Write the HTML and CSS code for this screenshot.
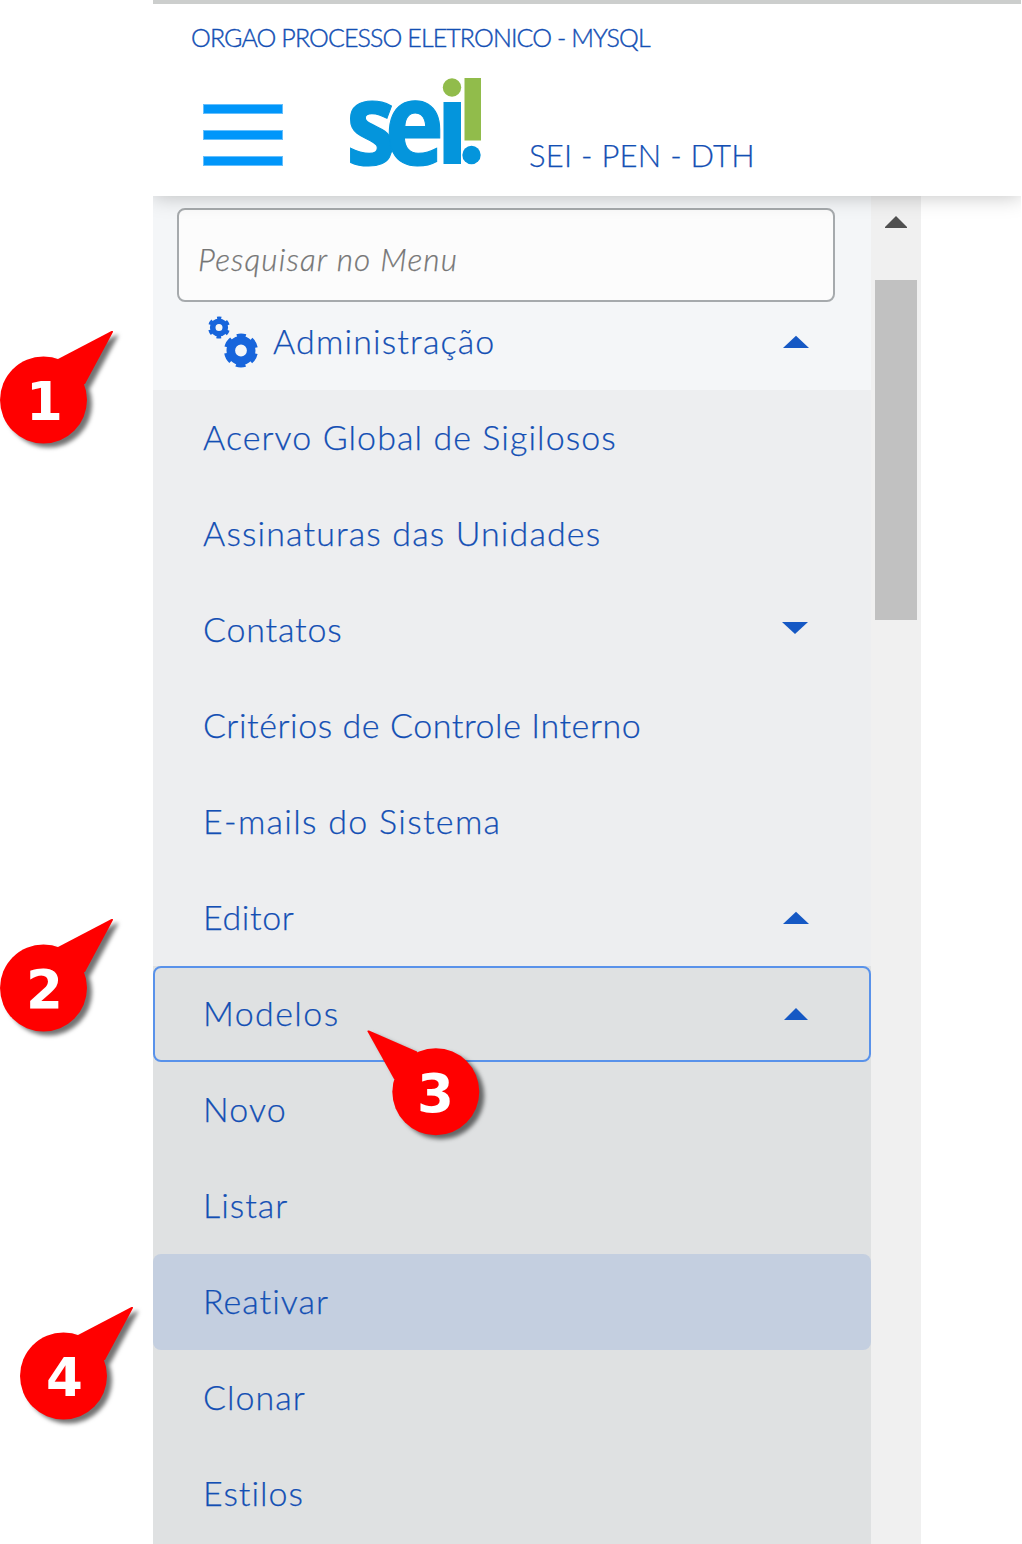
FILE: index.html
```html
<!DOCTYPE html>
<html lang="pt-BR">
<head>
<meta charset="utf-8">
<title>SEI - PEN - DTH</title>
<link rel="stylesheet" href="styles.css">
</head>
<body>
<div class="app">
  <header class="header">
    <div class="org"><span class="t-org">ORGAO PROCESSO ELETRONICO - MYSQL</span></div>
    <div class="brand">
      <div class="burger"><i></i><i></i><i></i></div>
      <svg class="logo" width="136" height="92" viewBox="0 0 136 92">
        <g fill="#0495dc">
          <text class="logo-text" transform="translate(-2 88.500) scale(.88 1)" x="0 44" y="0">se</text>
          <rect x="95.500" y="26" width="17.500" height="62"/>
          <circle cx="123.500" cy="79" r="9.200"/>
        </g>
        <g fill="#91bc4b">
          <circle cx="104" cy="11.500" r="9.200"/>
          <rect x="116.500" y="2" width="16.500" height="62.500"/>
        </g>
      </svg>
      <div class="system"><span class="t-system">SEI - PEN - DTH</span></div>
    </div>
  </header>
  <div class="body">
    <nav class="menu">
      <div class="search"><span class="t-search">Pesquisar no Menu</span></div>
      <a class="row root">
        <svg class="gears" width="52" height="54" viewBox="0 0 52 54">
          <g fill="none" stroke="#1765dc">
            <circle cx="12" cy="12.500" r="6.300" stroke-width="5.600"/>
            <circle cx="12" cy="12.500" r="9.500" stroke-width="3" stroke-dasharray="4.600 5.348" stroke-dashoffset="2.300" transform="rotate(-90 12 12.500)"/>
            <circle cx="34" cy="35.500" r="10.200" stroke-width="8.600"/>
            <circle cx="34" cy="35.500" r="14.800" stroke-width="4.400" stroke-dasharray="9.400 6.098" stroke-dashoffset="4.700" transform="rotate(-90 34 35.500)"/>
          </g>
        </svg>
        <span class="t-adm">Administração</span>
        <svg class="arrow" width="28" height="14" viewBox="0 0 28 14"><path d="M1 13L14 .8 27 13z"/></svg>
      </a>
      <a class="row"><span class="t-acervo">Acervo Global de Sigilosos</span></a>
      <a class="row"><span class="t-assin">Assinaturas das Unidades</span></a>
      <a class="row"><span class="t-cont">Contatos</span><svg class="arrow down" width="28" height="14" viewBox="0 0 28 14"><path d="M1 1H27L14 13z"/></svg></a>
      <a class="row"><span class="t-crit">Critérios de Controle Interno</span></a>
      <a class="row"><span class="t-mail">E-mails do Sistema</span></a>
      <a class="row"><span class="t-edit">Editor</span><svg class="arrow" width="28" height="14" viewBox="0 0 28 14"><path d="M1 13L14 .8 27 13z"/></svg></a>
      <div class="submenu">
        <a class="row focused"><span class="t-mod">Modelos</span><svg class="arrow" width="28" height="14" viewBox="0 0 28 14"><path d="M2 13L14 1 26 13z"/></svg></a>
        <a class="row"><span class="t-novo">Novo</span></a>
        <a class="row"><span>Listar</span></a>
        <a class="row hover"><span>Reativar</span></a>
        <a class="row"><span>Clonar</span></a>
        <a class="row"><span>Estilos</span></a>
      </div>
    </nav>
    <div class="scrollbar">
      <svg width="22" height="12" viewBox="0 0 22 12"><path d="M11 0L22 11V12H0V11z"/></svg>
      <div class="thumb"></div>
    </div>
  </div>
</div>

<div class="callout c1"><svg width="120" height="120"><circle cx="43.500" cy="71" r="43.500"/><path d="M58 30L111.500 2Q113.500 1.500 113 3L85 55 60 60z"/></svg><b>1</b></div>
<div class="callout c2"><svg width="120" height="120"><circle cx="43.500" cy="71" r="43.500"/><path d="M58 30L111.500 2Q113.500 1.500 113 3L85 55 60 60z"/></svg><b>2</b></div>
<div class="callout c3"><svg width="130" height="120"><circle cx="68.800" cy="62.800" r="43.500"/><path d="M.5 2.500Q0 1 2 1.500L50 22.500 55 50 27 50z"/></svg><b>3</b></div>
<div class="callout c4"><svg width="120" height="120"><circle cx="43.500" cy="71" r="43.500"/><path d="M58 30L111.500 2Q113.500 1.500 113 3L85 55 60 60z"/></svg><b>4</b></div>
</body>
</html>
```
FILE: styles.css
```css
* { box-sizing: border-box; }
body {
  margin: 0;
  height: 1544px;
  position: relative;
  overflow: hidden;
  background: #fff;
  color: #134fb4;
  font: 300 34px/40px Lato, "Open Sans", sans-serif;
  font-kerning: normal;
}
span { white-space: nowrap; -webkit-text-stroke: .25px currentColor; }
.app { margin: 0 1px 0 153px; height: 1544px; display: flex; flex-direction: column; overflow: hidden; }
.header {
  height: 196px;
  flex: none;
  border-top: 4px solid #cccecd;
  background: #fff;
  box-shadow: 0 0 20px rgba(0, 0, 0, .25);
  position: relative;
}
.org { padding: 18px 0 0 38px; font-size: 25px; line-height: 30px; }
.brand { display: flex; padding-left: 50px; margin-top: 24px; }
.burger { width: 80px; height: 62px; margin-top: 28px; display: flex; flex-direction: column; justify-content: space-between; }
.burger i { height: 10px; background: #0096fa; border: 1px solid #66bffc; }
.logo { margin-left: 65px; overflow: visible; }
.logo-text { font: 700 114px "Open Sans", sans-serif; stroke: #0495dc; stroke-width: 1.2px; }
.system { margin: 60px 0 0 45px; font-size: 31px; line-height: 38px; }

.body { flex: 1; display: flex; min-height: 0; }
.menu { width: 718px; background: #f4f6f8; }
.search {
  width: 658px;
  height: 94px;
  margin: 12px 0 -8px 24px;
  border: 2px solid #a6aaad;
  border-radius: 8px;
  background: #fcfcfc;
  padding: 29px 0 0 19px;
  color: #757575;
  font-size: 31.5px;
  font-style: italic;
  line-height: 40px;
}
.row { height: 96px; display: flex; align-items: flex-start; padding: 27px 61px 0 50px; background: #edeef0; }
.row.root { background: transparent; padding-left: 54px; }
.gears { margin: -6px 14px 0 0; flex: none; }
.arrow { margin: 14px 0 0 auto; fill: #1558c4; }
.arrow.down { margin-top: 12px; margin-right: 1px; }
.submenu { background: #dfe1e2; height: 578px; letter-spacing: 1px; }
.submenu .row { background: transparent; }
.submenu .focused { border: 2px solid #5992ea; border-radius: 8px; padding: 25px 59px 0 48px; }
.submenu .hover { background: #c4cfe0; border-radius: 8px; }
.scrollbar { width: 50px; background: #f0f0f0; display: flex; flex-direction: column; align-items: center; padding-top: 20px; }
.scrollbar svg { fill: #505050; }
.thumb { width: 42px; height: 340px; margin-top: 52px; background: #c1c1c1; }

.t-org { letter-spacing: -.9px; -webkit-text-stroke-width: .4px; }
.t-system { letter-spacing: .25px; }
.t-search { letter-spacing: 1.1px; }
.t-adm { letter-spacing: 1.15px; }
.t-acervo { letter-spacing: 1.08px; }
.t-assin { letter-spacing: 1.12px; }
.t-cont { letter-spacing: .8px; }
.t-crit { letter-spacing: .56px; }
.t-mail { letter-spacing: 1.3px; }
.t-edit { letter-spacing: .6px; }
.t-mod { letter-spacing: 1.4px; }
.t-novo { letter-spacing: 1.1px; }

.callout { position: absolute; color: #fff; }
.callout svg { display: block; overflow: visible; fill: #f00; filter: drop-shadow(5px 4px 2px rgba(0, 0, 0, .55)); }
.callout b { position: absolute; left: 1px; top: 42px; width: 87px; text-align: center; font: bold 53px/62px "DejaVu Sans", sans-serif; }
.c1 { left: 0; top: 329px; }
.c2 { left: 0; top: 917px; }
.c3 { left: 367px; top: 1029px; }
.c3 b { left: 25px; top: 34px; }
.c4 { left: 20px; top: 1305px; }
```
